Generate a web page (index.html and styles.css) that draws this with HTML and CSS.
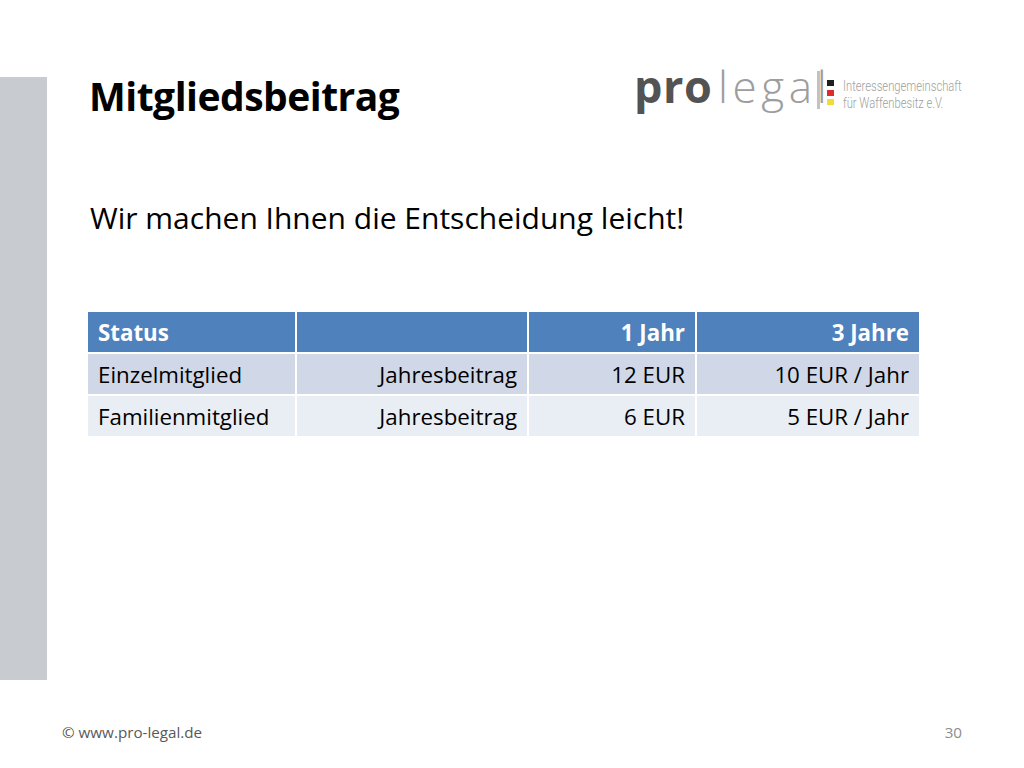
FILE: index.html
```html
<!DOCTYPE html>
<html lang="de">
<head>
<meta charset="utf-8">
<title>Mitgliedsbeitrag</title>
<link rel="stylesheet" href="styles.css">
</head>
<body>
<div class="slide">
  <div class="main">
    <div class="rail"></div>
    <div class="content">
      <header class="head">
        <h1 class="title">Mitgliedsbeitrag</h1>
        <div class="logo">
          <span class="logo-pro">pro</span><span class="logo-legal">legal</span>
          <span class="logo-bar"></span>
          <span class="flag"><i class="f-black"></i><i class="f-red"></i><i class="f-gold"></i></span>
          <span class="logo-claim"><span class="claim-line">Interessengemeinschaft</span><span class="claim-line">für Waffenbesitz e.V.</span></span>
        </div>
      </header>
      <p class="lead">Wir machen Ihnen die Entscheidung leicht!</p>
      <div class="table">
        <div class="cell th">Status</div>
        <div class="cell th"></div>
        <div class="cell th r">1 Jahr</div>
        <div class="cell th r">3 Jahre</div>
        <div class="cell odd">Einzelmitglied</div>
        <div class="cell odd r">Jahresbeitrag</div>
        <div class="cell odd r">12 EUR</div>
        <div class="cell odd r">10 EUR / Jahr</div>
        <div class="cell even">Familienmitglied</div>
        <div class="cell even r">Jahresbeitrag</div>
        <div class="cell even r">6 EUR</div>
        <div class="cell even r">5 EUR / Jahr</div>
      </div>
    </div>
  </div>
  <footer class="foot">
    <span class="copy">© www.pro-legal.de</span>
    <span class="num">30</span>
  </footer>
</div>
</body>
</html>
```
FILE: styles.css
```css
html, body { margin: 0; padding: 0; background: #fff; }
body { font-family: "Open Sans", Lato, sans-serif; color: #000; }
.slide { width: 1024px; height: 768px; display: flex; flex-direction: column; }
.main { display: flex; flex: 0 0 680px; }
.rail { width: 47px; margin-top: 77px; height: 603px; background: #c8cbcf; flex: none; }
.content { padding-left: 41px; flex: 1; }
.head { display: flex; justify-content: space-between; align-items: flex-start; height: 130px; padding-top: 68px; box-sizing: border-box; }
.title { margin: 0; font-size: 39px; font-weight: 700; line-height: 56px; padding-left: 1px; letter-spacing: -0.5px; }

.logo { display: flex; align-items: flex-start; flex: none; width: 329px; margin-right: 61px; margin-top: -4px; }
.logo-pro { flex: none; width: 84px; font-family: "Open Sans", sans-serif; font-weight: 700; font-size: 45px; line-height: 50px; color: #535353; margin-top: -3.5px; white-space: nowrap; letter-spacing: 0.6px; }
.logo-legal { flex: none; width: 99px; font-family: "Open Sans", sans-serif; font-weight: 300; font-size: 44px; line-height: 50px; color: #9d9d9d; margin-top: -3px; letter-spacing: 4.6px; white-space: nowrap; }
.logo-bar { flex: none; width: 3px; height: 38px; background: #c2c2c2; margin-top: 7px; }
.flag { flex: none; display: flex; flex-direction: column; gap: 3.5px; margin: 16px 0 0 7px; }
.flag i { display: block; width: 7px; height: 6px; }
.f-black { background: #1e1e1e; }
.f-red { background: #de2c2c; }
.f-gold { background: #f2dc3c; }
.logo-claim { display: flex; flex-direction: column; font-family: Roboto, "Liberation Sans", sans-serif; font-weight: 300; font-size: 14px; line-height: 16.5px; color: #a0a0a0; margin: 14px 0 0 9px; transform: scaleX(0.8); transform-origin: left top; white-space: nowrap; }

.lead { margin: 68px 0 0 2px; font-size: 30px; line-height: 40px; }
.table { display: grid; grid-template-columns: 207px 230px 166px 222px; grid-auto-rows: 40px; gap: 2px; margin-top: 74px; }
.cell { padding: 0 10px; display: flex; align-items: center; font-size: 22.3px; }
.cell.r { justify-content: flex-end; }
.th { background: #4f81bd; color: #fff; font-weight: 700; }
.odd { background: #d0d8e8; }
.even { background: #e9edf4; }
.foot { display: flex; justify-content: space-between; padding: 42px 62px 0 62px; font-size: 15.2px; }
.copy { color: #595959; }
.num { color: #8c8c8c; }
```
